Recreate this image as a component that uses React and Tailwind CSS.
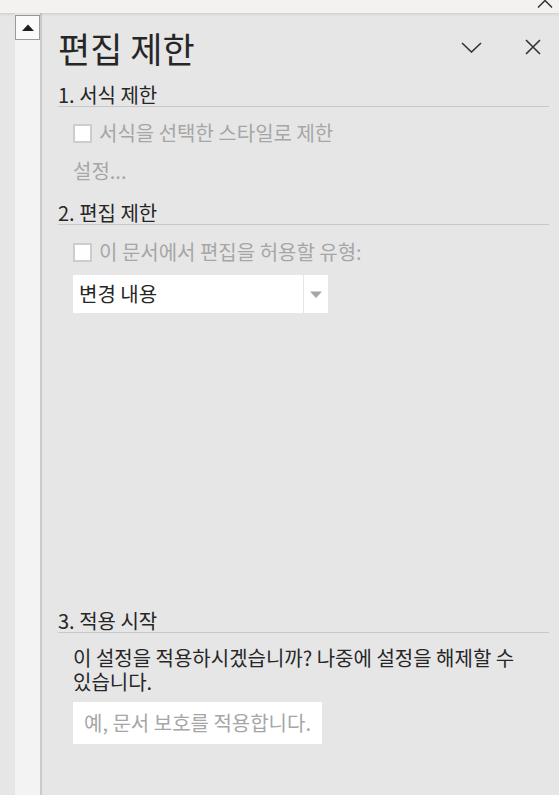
import React from "react";

const font = { fontFamily: '"Noto Sans CJK KR", "Noto Sans", sans-serif' };

function SectionHeader({ children }) {
  return (
    <div className="h-[23px] flex items-center border-b border-[#c8c8c8] text-[20px] leading-none text-[#262626]">
      {children}
    </div>
  );
}

function CheckRow({ label }) {
  return (
    <div className="h-[26px] flex items-center pl-[15px] gap-[7px]">
      <span className="w-[19px] h-[19px] bg-white border-2 border-[#cdcdcd] shrink-0" />
      <span className="text-[20px] leading-none text-[#a6a6a6]">{label}</span>
    </div>
  );
}

export default function App() {
  return (
    <div className="w-[559px] h-[795px] bg-[#e6e6e6] flex flex-col overflow-hidden" style={font}>
      {/* top strip */}
      <div className="h-[13px] bg-[#f3f2f1] shadow-[0_1px_3px_rgba(0,0,0,0.12)] relative z-10 flex justify-end pr-[5px] shrink-0">
        <svg width="16" height="8" viewBox="0 0 16 8" className="mr-[1px]">
          <path d="M1 7.5 L8 0.5 L15 7.5" fill="none" stroke="#333" strokeWidth="1.5" />
        </svg>
      </div>

      <div className="flex flex-1 min-h-0">
        <div className="w-[15px] shrink-0" />
        {/* scroll column */}
        <div className="w-[27px] shrink-0 bg-[#f3f3f3] border-r-2 border-[#cbcbcb] pt-[2px]">
          <div className="w-[25px] h-[25px] bg-[#fafafa] border border-[#9a9a9a] flex items-center justify-center">
            <svg width="12" height="7" viewBox="0 0 12 7">
              <path d="M0 7 L6 0.5 L12 7 Z" fill="#1e1e1e" />
            </svg>
          </div>
        </div>

        {/* task pane */}
        <div className="flex-1 flex flex-col pl-[16px] pr-[10px] pb-[51px]">
          <div className="mt-[14px] h-[40px] flex items-center">
            <h1 className="text-[35px] leading-none text-[#262626] font-normal">편집 제한</h1>
            <div className="ml-auto flex items-center gap-[43px] mr-[8px]">
              <svg width="21" height="11" viewBox="0 0 21 11">
                <path d="M1 1 L10.5 10 L20 1" fill="none" stroke="#333" strokeWidth="1.6" />
              </svg>
              <svg width="16" height="16" viewBox="0 0 16 16">
                <path d="M1 1 L15 15 M15 1 L1 15" fill="none" stroke="#333" strokeWidth="1.6" />
              </svg>
            </div>
          </div>

          <div className="mt-[17px]">
            <SectionHeader>1. 서식 제한</SectionHeader>
          </div>
          <div className="mt-[13px]">
            <CheckRow label="서식을 선택한 스타일로 제한" />
          </div>
          <div className="mt-[12px] h-[26px] flex items-center pl-[15px] text-[20px] leading-none text-[#a6a6a6]">
            설정...
          </div>

          <div className="mt-[18px]">
            <SectionHeader>2. 편집 제한</SectionHeader>
          </div>
          <div className="mt-[14px]">
            <CheckRow label="이 문서에서 편집을 허용할 유형:" />
          </div>
          <div className="mt-[10px] ml-[15px] w-[255px] h-[38px] flex">
            <div className="flex-1 bg-white flex items-center pl-[6px] text-[20px] leading-none text-[#262626]">
              변경 내용
            </div>
            <div className="w-[24px] ml-[1px] bg-white flex items-center justify-center">
              <svg width="12" height="7" viewBox="0 0 12 7">
                <path d="M0 0.5 L12 0.5 L6 7 Z" fill="#a6a6a6" />
              </svg>
            </div>
          </div>

          <div className="mt-auto">
            <SectionHeader>3. 적용 시작</SectionHeader>
          </div>
          <p className="mt-[13px] pl-[15px] text-[20px] leading-[24px] text-[#262626] break-keep">
            이 설정을 적용하시겠습니까? 나중에 설정을 해제할 수 있습니다.
          </p>
          <button className="mt-[8px] ml-[15px] w-[249px] h-[42px] bg-white text-[20px] leading-none text-[#a6a6a6] flex items-center justify-center">
            예, 문서 보호를 적용합니다.
          </button>
        </div>
      </div>
    </div>
  );
}
